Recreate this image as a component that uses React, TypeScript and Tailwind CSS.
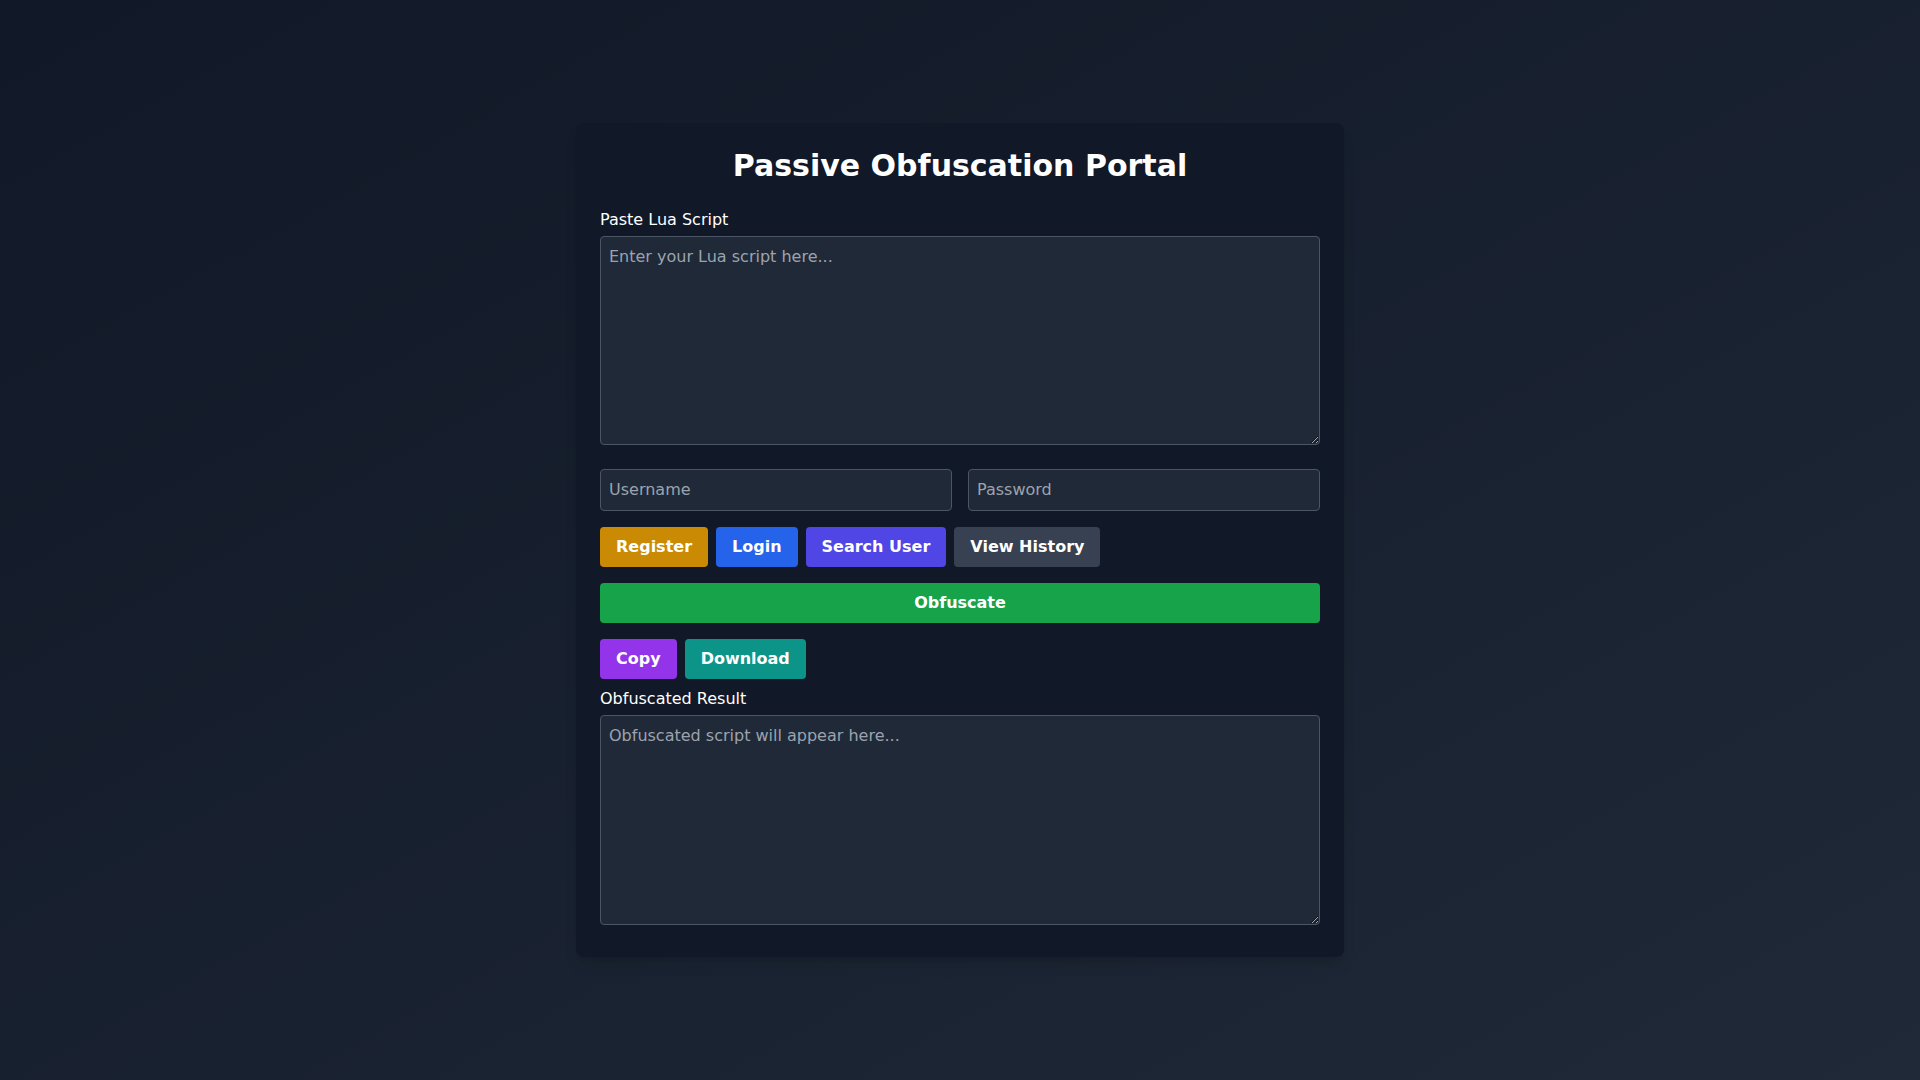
const inputCls =
  "p-2 bg-[#1f2937] border border-[#4b5563] rounded text-base text-white placeholder-[#9ca3af] outline-none";

const App = () => {
  return (
    <div className="min-h-screen w-full flex items-center justify-center bg-linear-to-br from-[#111827] to-[#1f2937] font-['DejaVu_Sans',sans-serif]">
      <div className="w-full max-w-3xl bg-[#111827] rounded-lg shadow-lg px-6 pt-[25px] pb-6 text-white">
        <h1 className="text-3xl font-bold text-center mb-6">Passive Obfuscation Portal</h1>

        <label className="block mb-1 text-base">Paste Lua Script</label>
        <textarea
          rows={8}
          placeholder="Enter your Lua script here..."
          className={`block w-full h-[209px] mb-6 ${inputCls}`}
        />

        <div className="flex gap-4 mb-4">
          <input type="text" placeholder="Username" className={`w-1/2 ${inputCls}`} />
          <input type="password" placeholder="Password" className={`w-1/2 ${inputCls}`} />
        </div>

        <div className="flex gap-2 mb-4">
          <button className="px-4 py-2 rounded bg-[#ca8a04] font-bold text-white">Register</button>
          <button className="px-4 py-2 rounded bg-[#2563eb] font-bold text-white">Login</button>
          <button className="px-4 py-2 rounded bg-[#4f46e5] font-bold text-white">Search User</button>
          <button className="px-4 py-2 rounded bg-[#374151] font-bold text-white">View History</button>
        </div>

        <button className="block w-full px-4 py-2 mb-4 rounded bg-[#16a34a] font-bold text-white">
          Obfuscate
        </button>

        <div className="flex gap-2 mb-2">
          <button className="px-4 py-2 rounded bg-[#9333ea] font-bold text-white">Copy</button>
          <button className="px-4 py-2 rounded bg-[#0d9488] font-bold text-white">Download</button>
        </div>

        <label className="block mb-1 text-base">Obfuscated Result</label>
        <textarea
          rows={8}
          readOnly
          placeholder="Obfuscated script will appear here..."
          className={`block w-full h-[210px] mb-2 ${inputCls}`}
        />
      </div>
    </div>
  );
};

export default App;
